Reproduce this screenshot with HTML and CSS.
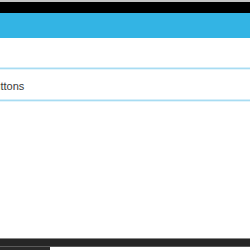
FILE: index.html
```html
<!DOCTYPE html>
<html>
<head>
    <meta charset="utf-8" />
    <title>Buttons</title>
    <link rel="stylesheet" href="styles.css">
</head>
<body>
    <div class="screen">
        <div class="status-bar"></div>
        <div class="action-bar"></div>
        <ul class="list">
            <li class="row empty"></li>
            <li class="row"><span class="label">Buttons</span></li>
        </ul>
        <div class="nav-bar"></div>
        <div class="track">
            <div class="thumb"></div>
        </div>
    </div>
</body>
</html>
```

FILE: styles.css
```css
body {
    margin: 0;
    background: #fff;
    font-family: "Liberation Sans", Arial, sans-serif;
}

.screen {
    width: 250px;
    height: 250px;
    display: flex;
    flex-direction: column;
    overflow: hidden;
}

.status-bar {
    height: 11px;
    background: #000;
    border-top: 2px solid #c4c4c4;
}

.action-bar {
    height: 25px;
    background: #33b4e4;
}

ul.list {
    list-style: none;
    margin: 0;
    padding: 0;
    flex: 1;
}

.row {
    /* divider under each row */
    border-bottom: 1px solid #d6effa;
    box-shadow: 0 1px 0 #a8dcf2, 0 2px 0 #e3f4fb;
}

.row.empty {
    height: 29px;
}

.row + .row {
    margin-top: 3px;
    height: 28px;
    display: flex;
    align-items: center;
    font-size: 11px;
    color: #3a3a3a;
}

.label {
    /* list is scrolled sideways a little */
    margin-left: -13px;
    padding-top: 2px;
}

.nav-bar {
    height: 7px;
    background: #262626;
    border-top: 1px solid #8a8a8a;
    border-bottom: 1px solid #5a5a5a;
}

.track {
    height: 3px;
    background: #fff;
}

.thumb {
    width: 50px;
    height: 3px;
    background: #2a2a2a;
}
```
